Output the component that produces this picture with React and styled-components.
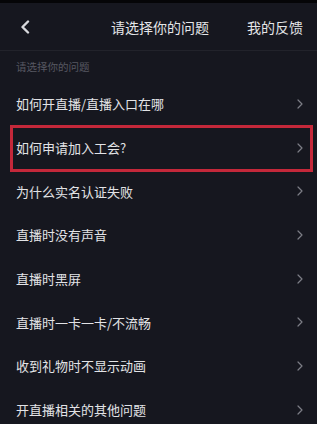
import React from 'react'
import styled, { createGlobalStyle } from 'styled-components'

const questions = [
  '如何开直播/直播入口在哪',
  '如何申请加入工会?',
  '为什么实名认证失败',
  '直播时没有声音',
  '直播时黑屏',
  '直播时一卡一卡/不流畅',
  '收到礼物时不显示动画',
  '开直播相关的其他问题',
]

export default function App() {
  return (
    <>
      <Global />
      <Page>
        <Header>
          <Back>
            <svg width="10" height="14" viewBox="0 0 10 14">
              <path d="M8 1.5 L2.5 7 L8 12.5" fill="none" stroke="#d8d9dd" strokeWidth="2.4" strokeLinecap="round" strokeLinejoin="round" />
            </svg>
          </Back>
          <Title>请选择你的问题</Title>
          <Feedback>我的反馈</Feedback>
        </Header>
        <Hint>请选择你的问题</Hint>
        <List>
          {questions.map((q, i) => (
            <Row key={q} $highlight={i === 1}>
              <span>{q}</span>
              <svg width="6" height="10" viewBox="0 0 6 10">
                <path d="M1 1 L5 5 L1 9" fill="none" stroke="#7c7d85" strokeWidth="1.2" strokeLinecap="round" strokeLinejoin="round" />
              </svg>
            </Row>
          ))}
        </List>
      </Page>
    </>
  )
}

const Global = createGlobalStyle`
  html, body {
    margin: 0;
    background: #16171f;
  }
  body {
    font-family: "Noto Sans CJK SC", "Noto Sans", sans-serif;
  }
`

const Page = styled.div`
  width: 317px;
  height: 424px;
  overflow: hidden;
  background: #16171f;
  border-top: 3px solid #050507;
  box-sizing: border-box;
`

const Header = styled.div`
  height: 47px;
  display: grid;
  grid-template-columns: 86px 1fr 86px;
  align-items: center;
  border-bottom: 1px solid #22232b;
  color: #e4e5e8;
`

const Back = styled.div`
  padding-left: 20px;
  display: flex;
  align-items: center;
  padding-top: 1px;
`

const Title = styled.div`
  font-size: 14px;
  text-align: center;
  margin-left: 3px;
`

const Feedback = styled.div`
  font-size: 14px;
  text-align: right;
  padding-right: 14px;
`

const Hint = styled.div`
  height: 31px;
  display: flex;
  align-items: center;
  padding-left: 16px;
  font-size: 10.5px;
  color: #565862;
`

const List = styled.div`
  display: flex;
  flex-direction: column;
`

const Row = styled.div`
  position: relative;
  height: 43.7px;
  display: flex;
  align-items: center;
  justify-content: space-between;
  padding: 0 14px 0 16px;
  font-size: 13px;
  color: #e2e3e6;

  ${(p) =>
    p.$highlight &&
    `
    &::after {
      content: '';
      position: absolute;
      left: 10px;
      right: 4px;
      top: -1px;
      bottom: -3px;
      border: 3px solid #c4283a;
    }
  `}
`
